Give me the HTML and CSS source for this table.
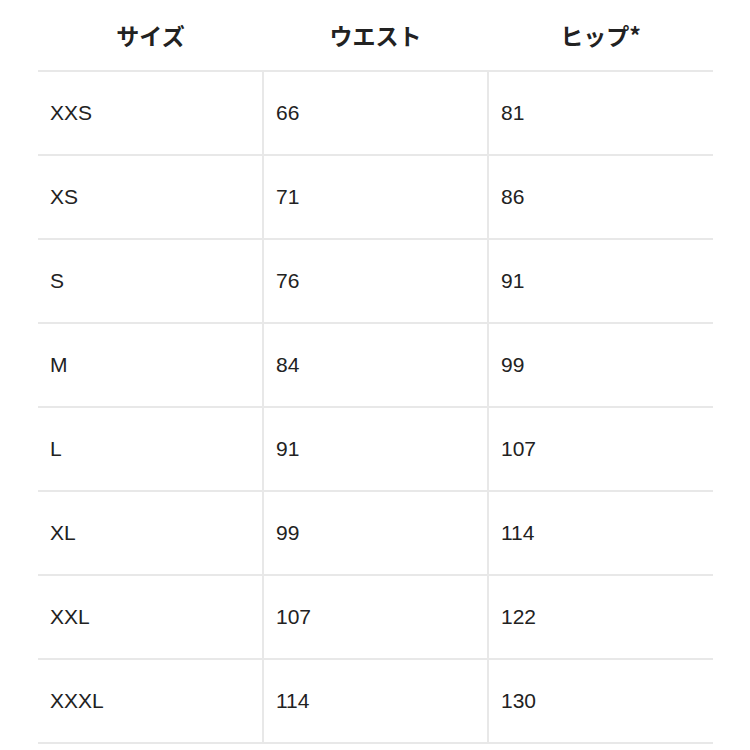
FILE: index.html
```html
<!DOCTYPE html>
<html lang="ja">
<head>
<meta charset="utf-8">
<link rel="stylesheet" href="styles.css">
</head>
<body>
<table class="size-table">
  <thead>
    <tr>
      <th>サイズ</th>
      <th>ウエスト</th>
      <th>ヒップ*</th>
    </tr>
  </thead>
  <tbody>
    <tr><td>XXS</td><td>66</td><td>81</td></tr>
    <tr><td>XS</td><td>71</td><td>86</td></tr>
    <tr><td>S</td><td>76</td><td>91</td></tr>
    <tr><td>M</td><td>84</td><td>99</td></tr>
    <tr><td>L</td><td>91</td><td>107</td></tr>
    <tr><td>XL</td><td>99</td><td>114</td></tr>
    <tr><td>XXL</td><td>107</td><td>122</td></tr>
    <tr><td>XXXL</td><td>114</td><td>130</td></tr>
  </tbody>
</table>
</body>
</html>
```
FILE: styles.css
```css
html, body {
  margin: 0;
  padding: 0;
  background: #fff;
}
body {
  font-family: "Liberation Sans", "Noto Sans CJK JP", sans-serif;
  color: #222;
}
.size-table {
  margin-left: 38px;
  width: 675px;
  border-collapse: collapse;
  table-layout: fixed;
}
.size-table th {
  height: 70px;
  padding: 0;
  font-family: "Noto Sans CJK JP", sans-serif;
  font-size: 23px;
  font-weight: 700;
  text-align: center;
  vertical-align: middle;
  border-bottom: 2px solid #e8e8e8;
}
.size-table td {
  height: 82px;
  padding: 0 12px;
  font-size: 21px;
  text-align: left;
  vertical-align: middle;
  border-bottom: 2px solid #e8e8e8;
}
.size-table td + td {
  border-left: 2px solid #e8e8e8;
}
```
